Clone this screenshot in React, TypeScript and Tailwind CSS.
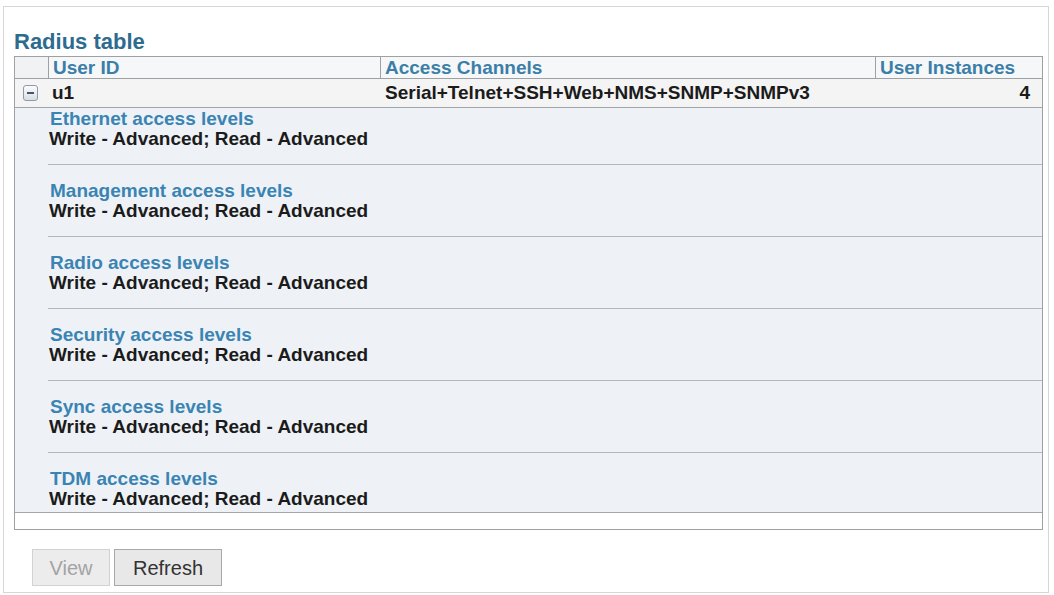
import React from 'react'

const FONT = { fontFamily: '"Liberation Sans", Arial, Helvetica, sans-serif' }

const sections = [
  'Ethernet access levels',
  'Management access levels',
  'Radio access levels',
  'Security access levels',
  'Sync access levels',
  'TDM access levels',
]

function MinusBox() {
  return (
    <div className="w-[15px] h-[16px] rounded-[3px] border border-[#8d9aab] bg-gradient-to-b from-[#fbfcfd] to-[#d9dee5] flex items-center justify-center">
      <div className="w-[7px] h-[2px] bg-[#4a5563]" />
    </div>
  )
}

export default function App() {
  return (
    <div className="w-[1054px] h-[595px] bg-white overflow-hidden pt-[6px] pl-[3px]" style={FONT}>
      <div className="w-[1046px] h-[587px] border border-[#d4d6d8] pt-[23px] pl-[10px]">
        {/* Title */}
        <h1 className="text-[22px] leading-[24px] font-bold text-[#2d6b8f] mb-[2px]">Radius table</h1>

        {/* Table */}
        <div className="w-[1029px] border border-[#9ea1a4]">
          {/* Header */}
          <div className="grid grid-cols-[33px_332px_495px_1fr] bg-[#f6f7f8] border-b border-[#9ea1a4] text-[19px] leading-[21px] font-bold text-[#3b7fa8]">
            <div className="bg-[#f1f2f3]" />
            <div className="border-l border-[#9ea1a4] pl-[4px]">User ID</div>
            <div className="border-l border-[#9ea1a4] pl-[4px]">Access Channels</div>
            <div className="border-l border-[#9ea1a4] pl-[4px]">User Instances</div>
          </div>

          {/* User row */}
          <div className="grid grid-cols-[33px_332px_495px_1fr] h-[29px] items-center bg-[#f4f4f4] border-b border-[#a3a6a9] text-[19px] font-bold text-[#1b1b1b]">
            <div className="pl-[8px]">
              <MinusBox />
            </div>
            <div className="pl-[4px]">u1</div>
            <div className="pl-[5px]">Serial+Telnet+SSH+Web+NMS+SNMP+SNMPv3</div>
            <div className="text-right pr-[12px]">4</div>
          </div>

          {/* Details */}
          <div className="bg-[#eef2f7] border-b border-[#a3a6a9] pl-[33px]">
            {sections.map((s, i) => (
              <div
                key={s}
                className={`${i === 0 ? 'pt-[1px]' : 'pt-[16px]'} ${
                  i === sections.length - 1 ? 'pb-[3px]' : 'pb-[15px] border-b border-[#b4b7ba]'
                }`}
              >
                <div className="pl-[2px] text-[19px] leading-[20px] font-bold text-[#3a84b3]">{s}</div>
                <div className="pl-[1px] text-[19px] leading-[20px] font-bold text-[#1b1b1b]">
                  Write - Advanced; Read - Advanced
                </div>
              </div>
            ))}
          </div>
          <div className="h-[16px] bg-white" />
        </div>

        {/* Buttons */}
        <div className="flex gap-[4px] mt-[19px] ml-[18px]">
          <button
            type="button"
            disabled
            className="w-[78px] h-[37px] bg-[#ececec] border border-[#d2d2d2] text-[20px] text-[#a3a3a3]"
          >
            View
          </button>
          <button
            type="button"
            className="w-[108px] h-[37px] bg-[#e8e8e8] border border-[#a9a9a9] text-[20px] text-[#333333]"
          >
            Refresh
          </button>
        </div>
      </div>
    </div>
  )
}
